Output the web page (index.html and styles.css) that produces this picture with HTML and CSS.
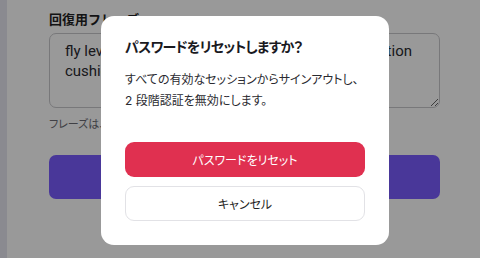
FILE: index.html
```html
<!DOCTYPE html>
<html lang="ja">
<head>
    <meta charset="UTF-8">
    <meta name="viewport" content="width=device-width, initial-scale=1.0">
    <title>パスワードをリセット</title>
    <link rel="stylesheet" href="styles.css">
</head>
<body>
    <div class="page">
        <div class="side-edge"></div>
        <div class="form">
            <label class="field-label" for="phrase">回復用フレーズ</label>
            <textarea id="phrase" class="phrase-input">fly level orbit junior pledge stable harvest production cushion frost</textarea>
            <p class="field-help">フレーズは、スペースで区切って入力してください。</p>
            <button class="submit-button">復元する</button>
        </div>
    </div>

    <!-- Confirm dialog -->
    <div class="overlay">
        <div class="dialog">
            <h2 class="dialog-title">パスワードをリセットしますか？</h2>
            <p class="dialog-text">すべての有効なセッションからサインアウトし、<br>2 段階認証を無効にします。</p>
            <div class="dialog-actions">
                <button class="danger-button">パスワードをリセット</button>
                <button class="cancel-button">キャンセル</button>
            </div>
        </div>
    </div>
</body>
</html>
```

FILE: styles.css
```css
* {
    box-sizing: border-box;
}
body {
    margin: 0;
    font-family: 'Inter', 'Noto Sans CJK JP', sans-serif;
    background: #ffffff;
    color: #1f1f24;
    width: 480px;
    height: 258px;
    overflow: hidden;
}
.page {
    display: flex;
    height: 258px;
}
.side-edge {
    width: 7px;
    background: #e6e6f0;
}
.form {
    display: flex;
    flex-direction: column;
    padding: 10px 0 0 42px;
    width: 440px;
}
.field-label {
    font-size: 13px;
    font-weight: 700;
    line-height: 18px;
    margin-bottom: 5px;
}
.phrase-input {
    width: 391px;
    height: 75px;
    border: 1px solid #c8c8cc;
    border-radius: 7px;
    padding: 7px 15px;
    font-family: 'Roboto', 'Noto Sans CJK JP', sans-serif;
    font-size: 15px;
    line-height: 20px;
    color: #2a2a30;
    resize: vertical;
}
.field-help {
    margin: 8px 0 0;
    font-size: 11px;
    line-height: 16px;
    color: #6b6b73;
    font-feature-settings: "palt";
}
.submit-button {
    margin-top: 23px;
    width: 391px;
    height: 44px;
    border: none;
    border-radius: 7px;
    background: #7a5cff;
    color: #ffffff;
    font-size: 14px;
}

/* Overlay + dialog */
.overlay {
    position: fixed;
    inset: 0;
    background: rgba(0, 0, 0, 0.4);
}
.dialog {
    position: absolute;
    left: 101px;
    top: 16px;
    width: 288px;
    height: 229px;
    background: #ffffff;
    border-radius: 13px;
    padding: 20px 24px 24px;
    font-feature-settings: "palt";
}
.dialog-title {
    margin: 0;
    font-size: 14px;
    font-weight: 700;
    line-height: 22px;
    letter-spacing: -0.8px;
    color: #1a1a1f;
}
.dialog-text {
    margin: 11px 0 0;
    font-size: 12px;
    line-height: 21px;
    color: #2a2a30;
    white-space: nowrap;
}
.dialog-actions {
    display: flex;
    flex-direction: column;
    gap: 9px;
    margin-top: 31px;
}
.danger-button, .cancel-button {
    height: 35px;
    border-radius: 9px;
    font-family: inherit;
    font-size: 12px;
    font-feature-settings: "palt";
    cursor: pointer;
}
.danger-button {
    border: none;
    background: #e03050;
    color: #ffffff;
}
.cancel-button {
    border: 1px solid #e2e2e6;
    background: #ffffff;
    color: #1f1f24;
}
```
